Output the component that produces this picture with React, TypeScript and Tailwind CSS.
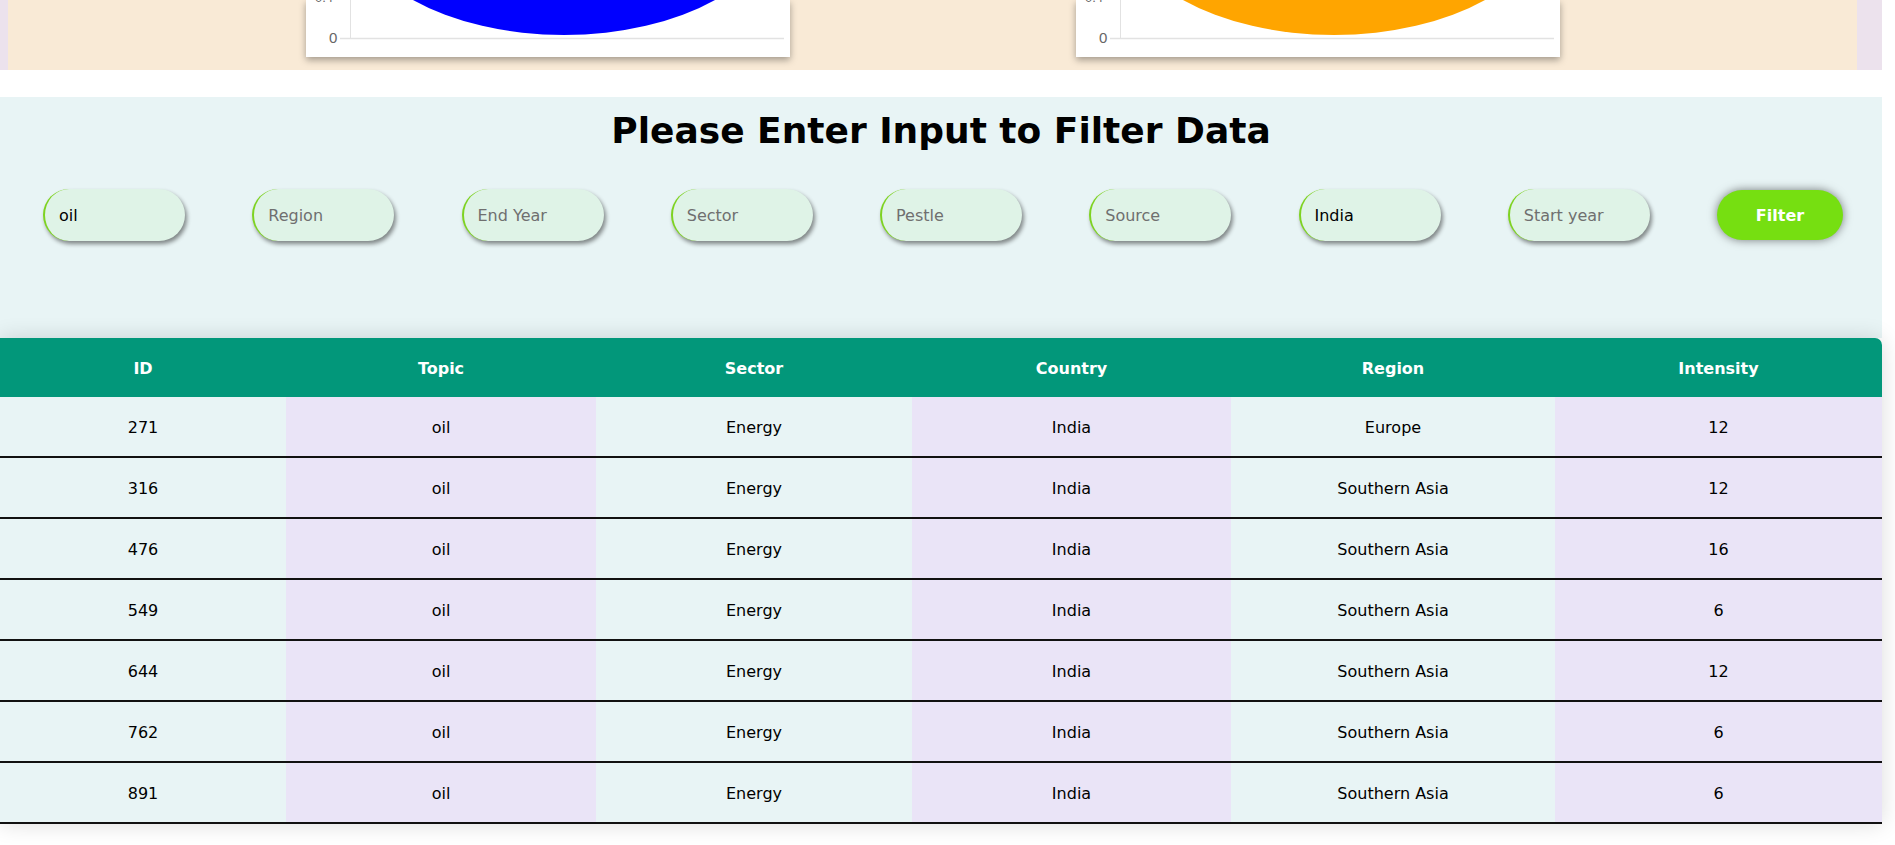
import React from "react";

const rows = [
  ["271", "oil", "Energy", "India", "Europe", "12"],
  ["316", "oil", "Energy", "India", "Southern Asia", "12"],
  ["476", "oil", "Energy", "India", "Southern Asia", "16"],
  ["549", "oil", "Energy", "India", "Southern Asia", "6"],
  ["644", "oil", "Energy", "India", "Southern Asia", "12"],
  ["762", "oil", "Energy", "India", "Southern Asia", "6"],
  ["891", "oil", "Energy", "India", "Southern Asia", "6"],
];

const headers = ["ID", "Topic", "Sector", "Country", "Region", "Intensity"];

function ChartCard({ color }: { color: string }) {
  return (
    <div className="w-[484px] h-[57px] bg-white shadow-[0_3px_7px_rgba(0,0,0,0.35)] overflow-hidden">
      <svg width="484" height="57" viewBox="0 0 484 57">
        <text x="9" y="2" fontSize="13" fill="#666" fontFamily="Liberation Sans, sans-serif">
          0.4
        </text>
        <line x1="44.5" y1="0" x2="44.5" y2="38" stroke="#e2e2e2" strokeWidth="1" />
        <ellipse cx="258" cy="-85" rx="214" ry="120" fill={color} />
        <line x1="34" y1="38.5" x2="478" y2="38.5" stroke="#e2e2e2" strokeWidth="1.5" />
        <text x="23" y="43" fontSize="15" fill="#666" fontFamily="Liberation Sans, sans-serif">
          0
        </text>
      </svg>
    </div>
  );
}

function FilterInput({ placeholder, value }: { placeholder: string; value?: string }) {
  return (
    <input
      className="w-[142px] h-[52px] rounded-full bg-[#dff3e7] border-0 border-l-2 border-[#7ed321] pl-[14px] pt-[1px] text-[16px] text-black outline-none shadow-[2px_3px_4px_rgba(0,0,0,0.45)] placeholder:text-[#6f6f6f] font-['DejaVu_Sans',sans-serif]"
      placeholder={placeholder}
      defaultValue={value}
    />
  );
}

export default function App() {
  return (
    <div className="w-[1882px] bg-white font-['DejaVu_Sans',sans-serif]">
      <section className="h-[70px] bg-[#ece2ed] pl-[8px] pr-[25px]">
        <div className="h-full bg-[#f9ead6] flex justify-center gap-[286px]">
          <ChartCard color="#0000ff" />
          <ChartCard color="#ffa500" />
        </div>
      </section>

      <div className="h-[27px]" />

      <section className="bg-[#e8f4f5] pt-[12px] pb-[97px]">
        <h1 className="text-center text-[36px] leading-[43px] font-bold text-black">
          Please Enter Input to Filter Data
        </h1>
        <div className="mt-[37px] flex items-center justify-between pl-[43px] pr-[39px]">
          <FilterInput placeholder="Topic" value="oil" />
          <FilterInput placeholder="Region" />
          <FilterInput placeholder="End Year" />
          <FilterInput placeholder="Sector" />
          <FilterInput placeholder="Pestle" />
          <FilterInput placeholder="Source" />
          <FilterInput placeholder="Country" value="India" />
          <FilterInput placeholder="Start year" />
          <button className="w-[126px] h-[50px] rounded-full bg-[#76df11] text-white font-bold text-[16px] pt-[1px] shadow-[0_0_10px_rgba(0,0,0,0.5)]">
            Filter
          </button>
        </div>
      </section>

      <table className="w-[1882px] border-separate border-spacing-0 table-fixed shadow-[0_0_22px_rgba(0,0,0,0.14)] rounded-tr-[7px]">
        <colgroup>
          <col className="w-[286px]" />
          <col className="w-[310px]" />
          <col className="w-[316px]" />
          <col className="w-[319px]" />
          <col className="w-[324px]" />
          <col className="w-[327px]" />
        </colgroup>
        <thead>
          <tr>
            {headers.map((h, i) => (
              <th
                key={h}
                className={
                  "h-[59px] pt-[2px] bg-[#02977a] text-white font-bold text-[16px] text-center " +
                  (i === 5 ? "rounded-tr-[7px]" : "")
                }
              >
                {h}
              </th>
            ))}
          </tr>
        </thead>
        <tbody>
          {rows.map((r) => (
            <tr key={r[0]}>
              {r.map((c, i) => (
                <td
                  key={i}
                  className={
                    "pt-[21px] pb-[19px] leading-[19px] text-[16px] text-black text-center border-b-2 border-[#111] " +
                    (i % 2 === 0 ? "bg-[#e8f4f5]" : "bg-[#eae4f7]")
                  }
                >
                  {c}
                </td>
              ))}
            </tr>
          ))}
        </tbody>
      </table>
      <div className="h-[40px]" />
    </div>
  );
}
